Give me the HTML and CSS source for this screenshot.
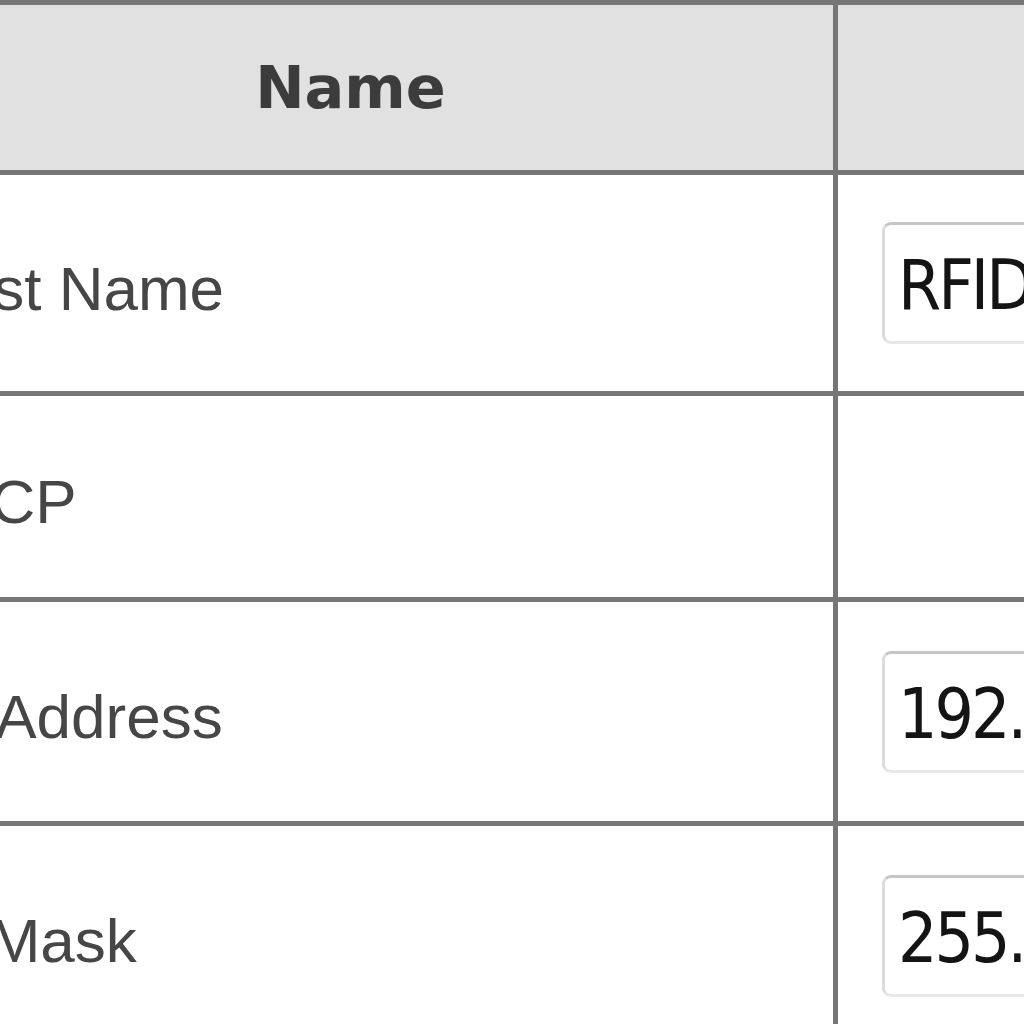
FILE: index.html
```html
<!DOCTYPE html>
<html lang="en">
<head>
<meta charset="utf-8">
<title>Network Settings</title>
<link rel="stylesheet" href="styles.css">
</head>
<body>
<div class="viewport">
  <div class="settings-table">
    <div class="cell head-cell">Name</div>
    <div class="cell head-cell head-value">Value</div>

    <div class="cell label-cell">Host Name</div>
    <div class="cell value-cell"><input class="field" type="text" value="RFID-Reader"></div>

    <div class="cell label-cell label-dhcp">DHCP</div>
    <div class="cell value-cell"></div>

    <div class="cell label-cell label-ip">IP Address</div>
    <div class="cell value-cell"><input class="field" type="text" value="192.168.1.100"></div>

    <div class="cell label-cell">IP Mask</div>
    <div class="cell value-cell"><input class="field" type="text" value="255.255.255.0"></div>
  </div>
</div>
</body>
</html>
```

FILE: styles.css
```css
html, body {
  margin: 0;
  padding: 0;
  background: #ffffff;
}

.viewport {
  width: 1024px;
  height: 1024px;
  overflow: hidden;
}

.settings-table {
  display: grid;
  grid-template-columns: 970px 800px;
  grid-template-rows: 175px 221px 206px 224px 224px;
  width: max-content;
  margin-left: -132px;
}

.cell {
  box-sizing: border-box;
  border-right: 5px solid #767676;
  border-bottom: 5px solid #767676;
  display: flex;
  align-items: center;
}

.head-cell {
  border-top: 5px solid #767676;
  background: #e1e1e1;
  justify-content: center;
  font-family: "DejaVu Sans", Verdana, sans-serif;
  font-weight: bold;
  font-size: 59px;
  color: #3c3c3c;
}

.head-value {
  color: transparent;
}

.label-cell {
  padding-left: 46px;
  padding-top: 10px;
  font-family: "Liberation Sans", Arial, sans-serif;
  font-size: 62px;
  color: #464646;
  white-space: nowrap;
}

.label-dhcp {
  padding-left: 33px;
}

.label-ip {
  padding-left: 56px;
}

.value-cell {
  padding-left: 44px;
}

.field {
  box-sizing: border-box;
  width: 420px;
  height: 122px;
  margin: 0;
  padding: 4px 14px 0 13px;
  border: 3px solid #dcdcdc;
  border-top-color: #c6c6c6;
  border-bottom-color: #e8e8e8;
  border-radius: 9px;
  background: #ffffff;
  font-family: "DejaVu Sans Condensed", "DejaVu Sans", Tahoma, sans-serif;
  font-stretch: condensed;
  font-size: 69px;
  letter-spacing: -3px;
  color: #141414;
  outline: none;
}
```
